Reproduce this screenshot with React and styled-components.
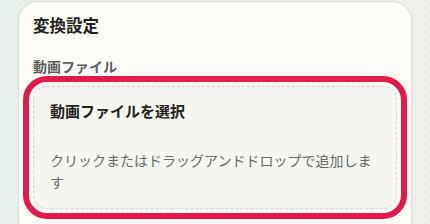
import styled, { createGlobalStyle } from "styled-components";

const GlobalStyle = createGlobalStyle`
  html, body {
    margin: 0;
    padding: 0;
    height: 100%;
    overflow: hidden;
  }

  body {
    background-color: #eef0eb;
    background-image:
      radial-gradient(circle, rgba(0, 0, 0, 0.025) 0.8px, transparent 1px),
      linear-gradient(90deg, #e7efeb 0%, #edf0ec 50%, #efefea 100%);
    background-size: 8px 8px, 100% 100%;
    font-family: "Noto Sans CJK JP", "Noto Sans", sans-serif;
  }
`;

const Page = styled.div`
  height: 224px;
  overflow: hidden;
  padding: 1px 0 0 18px;
  box-sizing: border-box;
`;

const Card = styled.section`
  width: 394px;
  box-sizing: border-box;
  min-height: 240px;
  background: #fcfbf6;
  border: 1px solid #dddcd3;
  border-radius: 20px;
  padding: 11px 14px 0 14px;
  box-shadow: 0 1px 3px rgba(0, 0, 0, 0.03);
`;

const Title = styled.h2`
  margin: 0;
  font-size: 16.5px;
  line-height: 24px;
  font-weight: 700;
  color: #1f2220;
`;

const FieldLabel = styled.div`
  margin-top: 19px;
  font-size: 14px;
  line-height: 20px;
  font-weight: 600;
  color: #5a5f5c;
`;

const DropZone = styled.div`
  margin-top: 10px;
  box-sizing: border-box;
  width: 364px;
  height: 123px;
  border: 1px dashed #d6d4ca;
  border-radius: 14px;
  background: #f6f6f1;
  padding: 13px 16px 15px 16px;
  outline: ${(p) => (p.$active ? "6px solid #e21b4b" : "none")};
  outline-offset: 4px;
  cursor: pointer;
`;

const DropTitle = styled.div`
  font-size: 15px;
  line-height: 22px;
  font-weight: 700;
  color: #1f2220;
`;

const DropHint = styled.div`
  margin-top: 27px;
  font-size: 14px;
  line-height: 22px;
  color: #676b67;
`;

export default function App() {
  return (
    <>
      <GlobalStyle />
      <Page>
        <Card>
          <Title>変換設定</Title>
          <FieldLabel>動画ファイル</FieldLabel>
          <DropZone $active>
            <DropTitle>動画ファイルを選択</DropTitle>
            <DropHint>クリックまたはドラッグアンドドロップで追加します</DropHint>
          </DropZone>
        </Card>
      </Page>
    </>
  );
}
